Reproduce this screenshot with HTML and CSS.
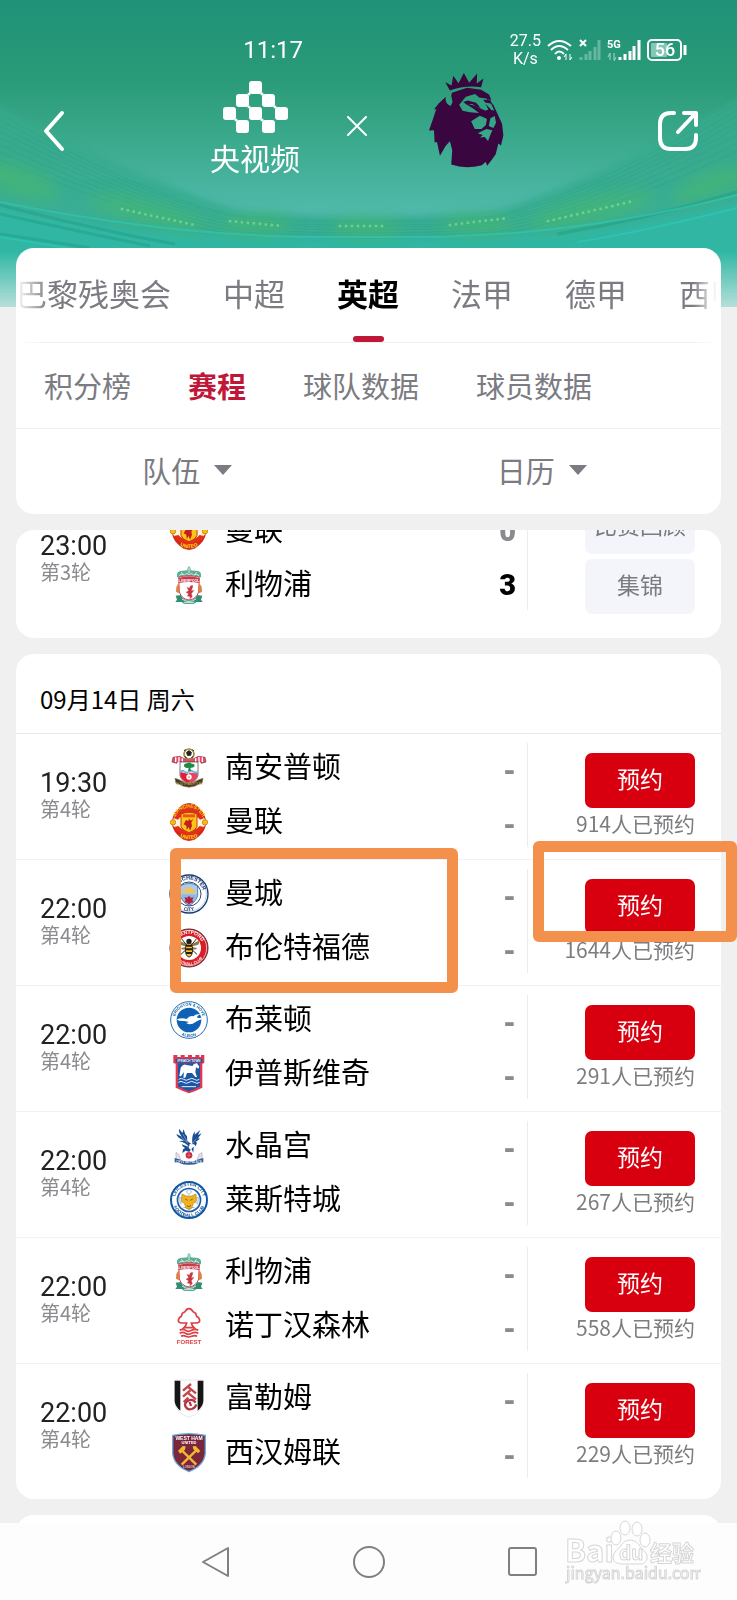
FILE: index.html
```html
<!DOCTYPE html>
<html lang="zh-CN">
<head>
    <meta charset="utf-8">
    <meta name="viewport" content="width=device-width, initial-scale=1">
    <title>英超赛程</title>
    <link rel="stylesheet" href="styles.css">
</head>
<body>
    <!-- 圆形队徽文字的弧线 -->
    <svg class="paths" aria-hidden="true">
        <defs>
            <path id="arc-top" d="M17 60a43 43 0 0 1 86 0"/>
            <path id="arc-bottom" d="M9 60a51 51 0 0 0 102 0"/>
        </defs>
    </svg>

    <header class="hero">
        <svg class="stadium" viewBox="0 0 737 307" preserveAspectRatio="none" aria-hidden="true">
            <defs>
                <linearGradient id="stands" x1="0" y1="0" x2="0" y2="1">
                    <stop offset="0" stop-color="#3aab8d"/>
                    <stop offset=".6" stop-color="#30aa8d"/>
                    <stop offset="1" stop-color="#33b9a8"/>
                </linearGradient>
                <filter id="soft"><feGaussianBlur stdDeviation="3"/></filter>
                <filter id="glow" x="-30%" y="-100%" width="160%" height="300%"><feGaussianBlur stdDeviation="8"/></filter>
            </defs>
            <path d="M-10 102q160 82 250 108 128 14 256 0Q600 180 747 94v223H-10z" fill="url(#stands)" opacity=".7" filter="url(#soft)"/>
            <g fill="none" stroke="#249b84" opacity=".3">
                <path d="M0 114q150 86 240 102 128 10 256 0 110-30 241-112"/>
                <path d="M0 120q150 82 240 98 128 10 256 0 110-28 241-108"/>
                <path d="M0 126q150 79 240 95 128 9 256 0 110-27 241-105"/>
                <path d="M0 132q150 76 240 91 128 9 256 0 110-26 241-101"/>
                <path d="M0 138q150 73 240 88 128 8 256 0 110-25 241-98"/>
                <path d="M0 145q150 70 240 84 128 8 256 0 110-23 241-94"/>
                <path d="M0 152q150 66 240 80 128 7 256 0 110-22 241-89"/>
                <path d="M0 160q150 62 240 75 128 7 256 0 110-20 241-84"/>
            </g>
            <path d="M-10 204q150 34 310 35h140q160-2 307-40v118H-10z" fill="#2fbaa9" opacity=".7" filter="url(#soft)"/>
            <g fill="#4bba68" opacity=".55" filter="url(#glow)">
                <ellipse cx="15" cy="180" rx="45" ry="14" transform="rotate(18 15 180)"/>
                <ellipse cx="150" cy="213" rx="62" ry="11" transform="rotate(13 150 213)"/>
                <ellipse cx="256" cy="225" rx="38" ry="10"/>
                <ellipse cx="366" cy="228" rx="36" ry="10"/>
                <ellipse cx="478" cy="225" rx="40" ry="10"/>
                <ellipse cx="590" cy="210" rx="65" ry="12" transform="rotate(-13 590 210)"/>
                <ellipse cx="710" cy="185" rx="40" ry="11" transform="rotate(-20 710 185)"/>
            </g>
            <g fill="none" stroke="#86dd93" stroke-width="3" stroke-linecap="round" stroke-dasharray="0 6" opacity=".65">
                <path d="M122 209l73 16M230 221l52 5M340 226h48M450 225l57-7M548 221l85-20"/>
            </g>
            <g fill="none" stroke="#1f9d86" stroke-width="3" opacity=".5">
                <path d="M0 205q100 26 175 39M0 214q90 20 150 32M737 192q-90 27-180 42M0 234l90 14"/>
            </g>
            <g fill="none" stroke="#2ec9b5" stroke-width="2" opacity=".6">
                <path d="M0 202q160 32 300 35h140q150-4 297-42M0 237l80 13M737 208q-100 25-160 34"/>
            </g>
        </svg>
        <div class="status">
            <time class="clock">11:17</time>
            <div class="status-icons">
                <span class="speed">27.5<br>K/s</span>
                <svg width="26" height="22" viewBox="0 0 26 22" fill="none" stroke="#fff" stroke-width="2">
                    <path d="M1 7q11-10 23 0M4 11q8-8 17 0M8 15q4-5 9 0"/>
                    <circle cx="12" cy="19" r="2" fill="#fff" stroke="none"/>
                    <path d="M19 15v6M23 15v6M17 18l2-3M25 18l-2 3" stroke-width="1"/>
                </svg>
                <svg width="22" height="22" viewBox="0 0 22 22" stroke="#fff">
                    <path d="M1 1l6 6M7 1L1 7" stroke-width="2"/>
                    <path d="M2 21v-3M7 21v-6M11 21v-9M16 21V8M20 21V1" stroke-width="3" opacity=".3"/>
                </svg>
                <svg width="34" height="22" viewBox="0 0 34 22" stroke="#fff">
                    <text class="net-type" x="0" y="9">5G</text>
                    <path d="M3 14v7M7 14v7M1 18l2-4M9 18l-2 4" stroke-width="1" opacity=".6"/>
                    <path d="M13 21v-3M18 21v-6M23 21v-9M27 21V7M32 21V1" stroke-width="3"/>
                </svg>
                <svg width="40" height="22" viewBox="0 0 40 22">
                    <rect x="1" y="1" width="33" height="20" rx="4" fill="none" stroke="#fff" stroke-width="2"/>
                    <rect x="4" y="4" width="16" height="14" rx="1" fill="#fff" opacity=".45"/>
                    <path d="M38 6v10" stroke="#fff" stroke-width="3"/>
                    <text class="battery-level" x="18" y="17">56</text>
                </svg>
            </div>
        </div>
        <div class="topbar">
            <button class="icon-button" aria-label="返回">
                <svg width="22" height="42" viewBox="0 0 22 42" fill="none" stroke="#fff" stroke-width="4" stroke-linecap="round" stroke-linejoin="round"><path d="M19 3L3 21l16 18"/></svg>
            </button>
            <div class="partners">
                <div class="brand">
                    <svg width="65" height="52" viewBox="99 66 195 156" fill="#fff">
                        <rect x="177" y="66" width="39" height="39" rx="9"/>
                        <rect x="138" y="105" width="39" height="39" rx="9"/>
                        <rect x="216" y="105" width="39" height="39" rx="9"/>
                        <rect x="99" y="144" width="39" height="39" rx="9"/>
                        <rect x="177" y="144" width="39" height="39" rx="9"/>
                        <rect x="255" y="144" width="39" height="39" rx="9"/>
                        <rect x="138" y="183" width="39" height="39" rx="9"/>
                        <rect x="216" y="183" width="39" height="39" rx="9"/>
                        <path d="M173 101h8v8h-8zM212 101h8v8h-8zM173 140h8v8h-8zM251 140h8v8h-8zM134 179h8v8h-8zM212 179h8v8h-8z"/>
                    </svg>
                    <span class="brand-name">央视频</span>
                </div>
                <svg class="cross" width="20" height="20" viewBox="0 0 20 20" stroke="#fff" stroke-width="2" stroke-linecap="round"><path d="M1 1l18 18M19 1L1 19"/></svg>
                <svg class="lion" width="75" height="96" viewBox="715 35 226 288" fill="#39063f">
                    <path d="M778 90l-14-25 19 10 5-29 16 22 16-31 16 30 24-28-1 30 20-15-7 26q-49-7-94 10z"/>
                    <path fill-rule="evenodd" d="M784 97l46-15 42 6 24 14 7 17-10-3 16 18 11 23 15 33 4 35-7 31-8-6-8 32-14 20-12 15-4-12-12 10q-49 13-92-2l3-43-7-27-13 14-17 30-9-42-7 2-2-37-15 1 12-35 10-30-7 1 14-18 22-20q-5 18 14 28l6-12-4-19zM806 133l20-24 28-8 12 10 22 3 14 15 10 22-14 6-25-12-21-9-30-8 26 16 18 14-28-2-22-5zM842 183l26-17 22 9-4 20-13 11-20 0zM900 174l13-7 4 20-8 16-14-6zM862 219l26-13 18 4-7 16-6 16-10-12-14 2 8-8z"/>
                    <path d="M818 125l14-5 25 7 13 15-12-3-13-8-16 1zM867 99l11 18 21 1 6 12-21-4zM885 130l18 19 12 2-2 14-14 2-10 10-9-13-17-9 20-3 11-5z"/>
                </svg>
            </div>
            <button class="icon-button" aria-label="分享">
                <svg width="42" height="42" viewBox="0 0 42 42" fill="none" stroke="#fff" stroke-width="4" stroke-linecap="round" stroke-linejoin="round"><path d="M17 3h-3Q3 3 3 14v14q0 11 11 11h14q11 0 11-11v-3M27 3h12v12M38 4L21 22"/></svg>
            </button>
        </div>
    </header>

    <main class="content">
        <section class="card filters">
            <nav class="leagues">
                <a href="#">巴黎残奥会</a>
                <a href="#">中超</a>
                <a href="#" class="active">英超</a>
                <a href="#">法甲</a>
                <a href="#">德甲</a>
                <a href="#">西甲</a>
            </nav>
            <nav class="sections">
                <a href="#">积分榜</a>
                <a href="#" class="active">赛程</a>
                <a href="#">球队数据</a>
                <a href="#">球员数据</a>
            </nav>
            <div class="selects">
                <label class="picker">
                    <select aria-label="队伍"><option>队伍</option></select>
                    <span class="caret"></span>
                </label>
                <label class="picker">
                    <select aria-label="日历"><option>日历</option></select>
                    <span class="caret"></span>
                </label>
            </div>
        </section>

        <!-- 上一轮，已滚动到筛选栏下方 -->
        <section class="card scrolled">
            <article class="match">
                <div class="when"><time>23:00</time><span>第3轮</span></div>
                <div class="teams">
                    <div class="team">
                        <svg class="crest" viewBox="0 0 120 120">
                            <circle cx="60" cy="61" r="51" fill="#d5261c"/>
                            <ellipse cx="60" cy="61" rx="51" ry="28" fill="#fff4d8"/>
                            <path d="M29 101l14 11 17 4 17-4 14-11-6-8H35z" fill="#df3a16" stroke="#a92f16" stroke-width="2"/>
                            <path d="M15 49q13-27 45-27t45 27l-12 4Q83 39 60 39T27 53zM15 75q14 25 45 25t45-25l-13-3Q80 85 60 85T28 72z" fill="#e42f17"/>
                            <path d="M36 36q24-10 48 0v38q-5 12-24 18-19-6-24-18z" fill="#fdc514" stroke="#c3391c" stroke-width="3"/>
                            <path d="M51 54l7 3 2-7 6 6 7-6-6 12 2 9-6 15-4-11-6 9-1-13-8-4z" fill="#c51e1b"/>
                            <circle cx="12" cy="61" r="8" fill="#f5bd15" stroke="#c98b19" stroke-width="3"/>
                            <circle cx="108" cy="61" r="8" fill="#f5bd15" stroke="#c98b19" stroke-width="3"/>
                            <text font-size="15" font-weight="700" text-anchor="middle" fill="#ffd21c"><textPath href="#arc-bottom" startOffset="50%">UNITED</textPath></text>
                        </svg>
                        <span>曼联</span><b class="score lost">0</b>
                    </div>
                    <div class="team">
                        <svg class="crest" viewBox="0 0 120 120">
                            <path d="M24 28q1-12 18-11l13-1 1-8 4-5 4 5 1 8 13 1q17-1 18 11v9H24z" fill="#5caf96"/>
                            <path d="M31 31q8-8 16 0 6-11 13 0 8-10 13 0 10-7 17 1M60 7v18M37 22l6 7M83 22l-6 7" fill="none" stroke="#d9efe5" stroke-width="3"/>
                            <path d="M29 37q31-10 62 0l-2 44q-7 21-29 24-22-3-29-24z" fill="#fff" stroke="#c64a53" stroke-width="3"/>
                            <path d="M29 40q31-12 62 0v14q-31-6-62 0z" fill="#c83b4b"/>
                            <text x="60" y="51" font-size="11" font-weight="700" text-anchor="middle" fill="#fff">LIVERPOOL</text>
                            <path d="M72 62q-10-3-10 8l-8-3 5 10-8 5 8 4-4 7 9 2-2 7 8-7-3-9 8-10-8 2z" fill="#c73645" stroke="#c73645"/>
                            <path d="M22 66q4-7 7-11 0 8 4 13l-4 17-8-5zM98 66q-4-7-7-11 0 8-4 13l4 17 8-5z" fill="#df804b"/>
                            <path d="M20 92l15-2q7 16 25 16t25-16l15 2-4 12 5 7H82l-7 5H45l-7-5H19l5-7z" fill="#318d75"/>
                            <path d="M39 102q21 15 42 0M44 112h32" stroke="#d2ede2" stroke-width="3" fill="none"/>
                        </svg>
                        <span>利物浦</span><b class="score">3</b>
                    </div>
                </div>
                <div class="action replays">
                    <button class="replay">比赛回顾</button>
                    <button class="replay">集锦</button>
                </div>
            </article>
        </section>

        <section class="card day">
            <h2>09月14日 周六</h2>
            <article class="match">
                <div class="when"><time>19:30</time><span>第4轮</span></div>
                <div class="teams">
                    <div class="team">
                        <svg class="crest" viewBox="0 0 120 120">
                            <path d="M12 28l20-3 14 7h28l14-7 20 3 3 14-14 4-5-8-16 6H44l-16-6-5 8-14-4z" fill="#e9496a" stroke="#7d3142" stroke-width="2"/>
                            <path d="M20 28v14M30 27v12M40 31v10M80 31v10M90 27v12M100 28v14" stroke="#fff" stroke-width="4"/>
                            <circle cx="60" cy="18" r="15" fill="#fff" stroke="#a08a3c" stroke-width="5"/>
                            <path d="M53 13l7-5 7 5-2 9H55zM45 8l5-3M70 5l5 4M47 26l6 3M73 26l-6 3" fill="#222" stroke="#222" stroke-width="3"/>
                            <path d="M33 42h54v40q-5 20-27 26Q38 102 33 82z" fill="#fff" stroke="#333" stroke-width="2"/>
                            <path d="M34 72l26 6v28Q38 100 34 82z" fill="#e31b3c"/>
                            <path d="M60 74h26v8q-4 19-26 25z" fill="#ea4464"/>
                            <path d="M34 68q7-5 13 0t13 0 13 0 13 0v6q-7 5-13 0t-13 0-13 0-13 0z" fill="#69b5e0"/>
                            <path d="M45 55q-1-9 9-9 7-6 14 1 9-1 9 7-3 7-13 5l2 10h-9l2-10q-9 4-14-4z" fill="#1b8a45"/>
                            <circle cx="60" cy="87" r="8" fill="#fff"/><circle cx="60" cy="87" r="3" fill="#e4b02a"/>
                            <path d="M18 91l12 4q30 20 60 0l12-4-3 15-8 2q-31 19-62 0l-8-2z" fill="#463a22" stroke="#85713b" stroke-width="2"/>
                            <text x="60" y="112" font-size="10" text-anchor="middle" fill="#c7b36b">SOUTHAMPTON</text>
                        </svg>
                        <span>南安普顿</span><b class="score none">-</b>
                    </div>
                    <div class="team">
                        <svg class="crest" viewBox="0 0 120 120">
                            <circle cx="60" cy="61" r="51" fill="#d5261c"/>
                            <ellipse cx="60" cy="61" rx="51" ry="28" fill="#fff4d8"/>
                            <path d="M31 17l12-9 17-4 17 4 12 9-5 10H36zM29 101l14 11 17 4 17-4 14-11-6-8H35z" fill="#df3a16" stroke="#a92f16" stroke-width="2"/>
                            <path d="M15 49q13-27 45-27t45 27l-12 4Q83 39 60 39T27 53zM15 75q14 25 45 25t45-25l-13-3Q80 85 60 85T28 72z" fill="#e42f17"/>
                            <path d="M36 36q24-10 48 0v38q-5 12-24 18-19-6-24-18z" fill="#fdc514" stroke="#c3391c" stroke-width="3"/>
                            <path d="M42 37h36v9H42z" fill="#e65619"/>
                            <path d="M51 54l7 3 2-7 6 6 7-6-6 12 2 9-6 15-4-11-6 9-1-13-8-4z" fill="#c51e1b"/>
                            <circle cx="12" cy="61" r="8" fill="#f5bd15" stroke="#c98b19" stroke-width="3"/>
                            <circle cx="108" cy="61" r="8" fill="#f5bd15" stroke="#c98b19" stroke-width="3"/>
                            <text font-size="15" font-weight="700" text-anchor="middle" fill="#ffd21c"><textPath href="#arc-top" startOffset="50%">MANCHESTER</textPath></text>
                            <text font-size="15" font-weight="700" text-anchor="middle" fill="#ffd21c"><textPath href="#arc-bottom" startOffset="50%">UNITED</textPath></text>
                        </svg>
                        <span>曼联</span><b class="score none">-</b>
                    </div>
                </div>
                <div class="action"><button class="book">预约</button><span>914人已预约</span></div>
            </article>
            <article class="match">
                <div class="when"><time>22:00</time><span>第4轮</span></div>
                <div class="teams">
                    <div class="team">
                        <svg class="crest" viewBox="0 0 120 120">
                            <circle cx="60" cy="60" r="57" fill="#fff" stroke="#1a3b73" stroke-width="4"/>
                            <circle cx="60" cy="60" r="52" fill="none" stroke="#8cb8e6" stroke-width="2"/>
                            <circle cx="60" cy="60" r="36" fill="#fff" stroke="#294c86" stroke-width="3"/>
                            <path d="M34 36q26-16 52 0v29Q80 86 60 94 40 86 34 65z" fill="#a9cdee" stroke="#294c86" stroke-width="2"/>
                            <path d="M36 61h48q-3 22-24 31-21-9-24-31z" fill="#8abbe7"/>
                            <path d="M41 57V45l7 4 4-12 8 8 8-9 4 13 7-3-2 13z" fill="#f1c45a"/>
                            <path d="M60 65l5 6 9-1-4 8 4 7-9 1-5 6-5-6-9-1 4-7-4-8 9 1z" fill="#b71d3e"/>
                            <text font-size="16" font-weight="700" text-anchor="middle" fill="#1a3567"><textPath href="#arc-top" startOffset="50%">MANCHESTER</textPath></text>
                            <text font-size="15" font-weight="700" text-anchor="middle" fill="#1a3567"><textPath href="#arc-bottom" startOffset="50%">CITY</textPath></text>
                        </svg>
                        <span>曼城</span><b class="score none">-</b>
                    </div>
                    <div class="team">
                        <svg class="crest" viewBox="0 0 120 120">
                            <circle cx="60" cy="60" r="57" fill="#d91d29" stroke="#57252a" stroke-width="3"/>
                            <circle cx="60" cy="60" r="53" fill="none" stroke="#fff" stroke-width="2"/>
                            <circle cx="60" cy="60" r="36" fill="#fff"/>
                            <path d="M57 50L31 38q-4 10 4 13l20 5-19 4q2 9 20 1zM63 50l26-12q4 10-4 13l-20 5 19 4q-2 9-20 1z" fill="#927844"/>
                            <ellipse cx="60" cy="65" rx="11" ry="22" fill="#f4be36" stroke="#332b22" stroke-width="3"/>
                            <path d="M51 53h18M49 64h22M51 75h18" stroke="#231e19" stroke-width="6"/>
                            <circle cx="60" cy="40" r="8" fill="#231e19"/>
                            <path d="M50 66L36 79M70 66l14 13M52 50L38 33M68 50l14-17" stroke="#332b22" stroke-width="3"/>
                            <text font-size="15" font-weight="700" text-anchor="middle" fill="#fff"><textPath href="#arc-top" startOffset="50%">BRENTFORD</textPath></text>
                            <text font-size="11" font-weight="700" text-anchor="middle" fill="#fff"><textPath href="#arc-bottom" startOffset="50%">FOOTBALL CLUB</textPath></text>
                        </svg>
                        <span>布伦特福德</span><b class="score none">-</b>
                    </div>
                </div>
                <div class="action"><button class="book">预约</button><span>1644人已预约</span></div>
                <div class="mark mark-teams"></div>
                <div class="mark mark-book"></div>
            </article>
            <article class="match">
                <div class="when"><time>22:00</time><span>第4轮</span></div>
                <div class="teams">
                    <div class="team">
                        <svg class="crest" viewBox="0 0 120 120">
                            <circle cx="60" cy="60" r="55" fill="#fff" stroke="#1e70b2" stroke-width="3"/>
                            <circle cx="60" cy="60" r="37" fill="#0d62b5"/>
                            <path d="M22 59q15-7 31-2 8-11 21-8 4-7 21-7-8 4-12 10 6 3 11 1l7 4q-13 3-20 8-17 13-29 4l8-3-14-3q-13 1-24-4z" fill="#fff"/>
                            <text font-size="12" font-weight="700" text-anchor="middle" fill="#155c9f"><textPath href="#arc-top" startOffset="50%">BRIGHTON &amp; HOVE</textPath></text>
                            <text font-size="12" font-weight="700" text-anchor="middle" fill="#155c9f"><textPath href="#arc-bottom" startOffset="50%">ALBION</textPath></text>
                        </svg>
                        <span>布莱顿</span><b class="score none">-</b>
                    </div>
                    <div class="team">
                        <svg class="crest" viewBox="0 0 120 120">
                            <path d="M13 3h12v6h10V3h12v6h10V3h12v6h10V3h12v6h5V3h10v24l-6 2v72q-15 8-40 17-23-9-40-17V29l-7-2z" fill="#e03853"/>
                            <path d="M20 14h80v12H20z" fill="#29529b"/>
                            <path d="M27 28h66v69q-13 7-33 15-20-8-33-15z" fill="#1c56a5"/>
                            <path d="M35 41q9-14 17-8l19 3q2-8 13-8l7 10-3 6-7-4-2 15 5 14h-5l-10-12H54l-5 14h-6l2-17-9 13-5-1z" fill="#fff"/>
                            <path d="M29 76q8-6 15 0t16 0 16 0 15 0M28 85q8-6 16 0t16 0 16 0 16 0M38 98h43" fill="none" stroke="#e8f2ff" stroke-width="3"/>
                            <text x="60" y="24" font-size="9" font-weight="700" text-anchor="middle" fill="#fff">IPSWICH TOWN</text>
                        </svg>
                        <span>伊普斯维奇</span><b class="score none">-</b>
                    </div>
                </div>
                <div class="action"><button class="book">预约</button><span>291人已预约</span></div>
            </article>
            <article class="match">
                <div class="when"><time>22:00</time><span>第4轮</span></div>
                <div class="teams">
                    <div class="team">
                        <svg class="crest" viewBox="0 0 120 120">
                            <path d="M60 63Q51 50 29 45l16-1Q24 35 22 24l17 8Q28 20 30 8l10 13 4-11q3 15 10 21l1 14 15 11q-3-28 8-40l-1 10 17-14-7 15 11-5-11 15 6 1-13 10 4 2q-1 10-10 14l-1 16-6-12-6 10-11-4-10 7 2-11 6-4q-9-4-10-11z" fill="#1b4e91"/>
                            <path d="M37 34l19 17M42 25l13 22M82 38L70 53" stroke="#9eb9da" stroke-width="2"/>
                            <path d="M62 54l13 1 6 6-9 3-7 7-6-5z" fill="#fff"/>
                            <path d="M21 101V79l8 6 6 16zM84 101l7-17 8-4v20z" fill="#e9e1e4" stroke="#a6abbc" stroke-width="2"/>
                            <circle cx="60" cy="88" r="10" fill="#c52a41"/><path d="M53 88h14M60 80v15" stroke="#ef7781" stroke-width="2"/>
                            <path d="M17 96l13 4q30 13 60 0l13-4v13l-12 1q-31 13-62 0l-12-1z" fill="#345d9c"/>
                            <text x="60" y="110" font-size="9" text-anchor="middle" fill="#fff">CRYSTAL PALACE</text>
                        </svg>
                        <span>水晶宫</span><b class="score none">-</b>
                    </div>
                    <div class="team">
                        <svg class="crest" viewBox="0 0 120 120">
                            <circle cx="60" cy="60" r="54" fill="#fff" stroke="#0d59a8" stroke-width="6"/>
                            <circle cx="60" cy="60" r="37" fill="#145dac"/><circle cx="60" cy="60" r="32" fill="#fff"/>
                            <path d="M60 28l8 8-8 7-8-7zM32 52l9 4v10l-7 6zM88 52l-9 4v10l7 6zM43 83l11-1 6 9 6-9 11 1" fill="none" stroke="#9db8d5" stroke-width="3"/>
                            <path d="M39 42l13 6h16l13-6 1 22-9 6-5 15-8 3-9-3-5-15-9-6z" fill="#edb422" stroke="#be7f16" stroke-width="2"/>
                            <path d="M49 57l7 4M71 57l-7 4M54 77l6 3 6-3" stroke="#8d5b1c" stroke-width="3" fill="none"/>
                            <text font-size="14" font-weight="700" text-anchor="middle" fill="#16498e"><textPath href="#arc-top" startOffset="50%">LEICESTER CITY</textPath></text>
                            <text font-size="14" font-weight="700" text-anchor="middle" fill="#16498e"><textPath href="#arc-bottom" startOffset="50%">FOOTBALL CLUB</textPath></text>
                        </svg>
                        <span>莱斯特城</span><b class="score none">-</b>
                    </div>
                </div>
                <div class="action"><button class="book">预约</button><span>267人已预约</span></div>
            </article>
            <article class="match">
                <div class="when"><time>22:00</time><span>第4轮</span></div>
                <div class="teams">
                    <div class="team">
                        <svg class="crest" viewBox="0 0 120 120">
                            <path d="M24 28q1-12 18-11l13-1 1-8 4-5 4 5 1 8 13 1q17-1 18 11v9H24z" fill="#5caf96"/>
                            <path d="M31 31q8-8 16 0 6-11 13 0 8-10 13 0 10-7 17 1M60 7v18M37 22l6 7M83 22l-6 7" fill="none" stroke="#d9efe5" stroke-width="3"/>
                            <path d="M29 37q31-10 62 0l-2 44q-7 21-29 24-22-3-29-24z" fill="#fff" stroke="#c64a53" stroke-width="3"/>
                            <path d="M29 40q31-12 62 0v14q-31-6-62 0z" fill="#c83b4b"/>
                            <text x="60" y="51" font-size="11" font-weight="700" text-anchor="middle" fill="#fff">LIVERPOOL</text>
                            <path d="M72 62q-10-3-10 8l-8-3 5 10-8 5 8 4-4 7 9 2-2 7 8-7-3-9 8-10-8 2z" fill="#c73645" stroke="#c73645"/>
                            <path d="M22 66q4-7 7-11 0 8 4 13l-4 17-8-5zM98 66q-4-7-7-11 0 8-4 13l4 17 8-5z" fill="#df804b"/>
                            <path d="M20 92l15-2q7 16 25 16t25-16l15 2-4 12 5 7H82l-7 5H45l-7-5H19l5-7z" fill="#318d75"/>
                            <path d="M39 102q21 15 42 0M44 112h32" stroke="#d2ede2" stroke-width="3" fill="none"/>
                        </svg>
                        <span>利物浦</span><b class="score none">-</b>
                    </div>
                    <div class="team">
                        <svg class="crest" viewBox="0 0 120 120">
                            <path d="M53 51H38q-11-1-10-9 2-9 9-11l3-9 8-5q5-9 12-9t12 9l8 5 3 9q7 2 9 11 1 8-10 9H67q2 9 8 14H45q6-5 8-14zM32 73q10-6 18 0t18 0 20 0M32 82q10-6 18 0t18 0 20 0M36 91q7-4 14 0t18 0 16 0" fill="none" stroke="#dc3e43" stroke-width="5"/>
                            <text x="60" y="115" font-size="18" font-weight="700" text-anchor="middle" fill="#dc3e43">FOREST</text>
                        </svg>
                        <span>诺丁汉森林</span><b class="score none">-</b>
                    </div>
                </div>
                <div class="action"><button class="book">预约</button><span>558人已预约</span></div>
            </article>
            <article class="match">
                <div class="when"><time>22:00</time><span>第4轮</span></div>
                <div class="teams">
                    <div class="team">
                        <svg class="crest" viewBox="0 0 120 120">
                            <path d="M17 6h86v65q-4 35-43 47-39-12-43-47z" fill="#fff" stroke="#ddd" stroke-width="2"/>
                            <path d="M17 8h17v90Q19 87 17 70zM86 8h17v62q-2 17-17 28z" fill="#161616"/>
                            <path d="M42 38l24-20M56 26l25 20M42 56l22-19M56 44l25 20M44 72l14-13" fill="none" stroke="#c64249" stroke-width="7"/>
                            <path d="M80 74Q72 62 59 67q-14 6-10 18 6 12 19 8 12-4 13-14M62 72l4 12" fill="none" stroke="#b53542" stroke-width="7"/>
                        </svg>
                        <span>富勒姆</span><b class="score none">-</b>
                    </div>
                    <div class="team">
                        <svg class="crest" viewBox="0 0 120 120">
                            <path d="M11 7q49-10 98 0v53q-3 38-49 56-46-18-49-56z" fill="#7b263c" stroke="#64b1da" stroke-width="4"/>
                            <path d="M36 50l46 45M84 50L38 95" stroke="#efb931" stroke-width="7"/>
                            <path d="M27 54l14-15 9 1-2 10-14 12zM71 40l9-1 14 15-7 7-14-12z" fill="#efb931"/>
                            <text x="60" y="22" font-size="15" font-weight="700" text-anchor="middle" fill="#fff">WEST HAM</text>
                            <text x="60" y="34" font-size="12" font-weight="700" text-anchor="middle" fill="#fff">UNITED</text>
                            <text x="60" y="106" font-size="8" text-anchor="middle" fill="#fff">LONDON</text>
                        </svg>
                        <span>西汉姆联</span><b class="score none">-</b>
                    </div>
                </div>
                <div class="action"><button class="book">预约</button><span>229人已预约</span></div>
            </article>
        </section>

        <section class="card next-day"></section>
    </main>

    <footer class="system-nav">
        <button class="icon-button" aria-label="后退">
            <svg width="32" height="34" viewBox="0 0 32 34" fill="none" stroke="#808080" stroke-width="2" stroke-linejoin="round"><path d="M28 3v28L3 17z"/></svg>
        </button>
        <button class="icon-button" aria-label="主页">
            <svg width="32" height="34" viewBox="0 0 32 34" fill="none" stroke="#808080" stroke-width="2"><circle cx="16" cy="17" r="15"/></svg>
        </button>
        <button class="icon-button" aria-label="最近任务">
            <svg width="32" height="34" viewBox="0 0 32 34" fill="none" stroke="#808080" stroke-width="2"><rect x="3" y="3" width="27" height="27" rx="2"/></svg>
        </button>
        <svg class="watermark" width="136" height="66" viewBox="0 0 136 66">
            <g fill="#fff" stroke="#d6d6d6">
                <text x="0" y="43" font-size="31" font-weight="700">Bai</text>
                <ellipse cx="51" cy="19" rx="5" ry="7"/><ellipse cx="60" cy="9" rx="5" ry="7"/><ellipse cx="72" cy="10" rx="5" ry="7"/><ellipse cx="80" cy="21" rx="5" ry="7"/>
                <path d="M65 21q7 0 11 8 7 5 6 11-2 6-9 5H57q-8 0-9-6 0-6 7-11 4-7 10-7z"/>
                <text x="54" y="41" font-size="19" font-weight="700">du</text>
                <text x="85" y="42" font-size="22" font-weight="700">经验</text>
                <text x="1" y="60" font-size="16">jingyan.baidu.com</text>
            </g>
        </svg>
    </footer>
</body>
</html>
```
FILE: styles.css
```css
* {
    box-sizing: border-box;
}

body {
    margin: 0;
    height: 100vh;
    display: flex;
    flex-direction: column;
    overflow: hidden;
    background: #f0f0f0;
    color: #000;
    font-family: "Noto Sans CJK SC", "Noto Sans", sans-serif;
}

a {
    color: inherit;
    text-decoration: none;
}

button,
select {
    border: none;
    padding: 0;
    background: none;
    color: inherit;
    font: inherit;
}

.paths {
    position: absolute;
    width: 0;
    height: 0;
}

/* 顶部 */
.hero {
    position: relative;
    flex: none;
    height: 248px;
    color: #fff;
}

.stadium {
    position: absolute;
    top: 0;
    left: 0;
    z-index: -1;
    width: 100%;
    height: 307px;
    background: linear-gradient(#1f9178, #2a9b78 26%, #3dab8f 48%, #50b9aa 68%, #35b5a0);
    mask-image: linear-gradient(#000 82%, rgba(0, 0, 0, 0.3));
}

.status {
    display: flex;
    justify-content: space-between;
    align-items: center;
    height: 66px;
    padding: 34px 50px 0 33%;
}

.clock {
    font-family: Roboto, sans-serif;
    font-size: 24px;
}

.status-icons {
    display: flex;
    align-items: center;
    gap: 6px;
}

.speed {
    font-family: Roboto, sans-serif;
    font-size: 16px;
    line-height: 18px;
    text-align: center;
}

.net-type {
    font: 700 11px Roboto, sans-serif;
    fill: #fff;
    stroke: none;
}

.battery-level {
    font: 500 18px Roboto, sans-serif;
    fill: #fff;
    text-anchor: middle;
}

.topbar {
    display: flex;
    justify-content: space-between;
    align-items: center;
    height: 130px;
    padding: 0 38px 0 43px;
}

.icon-button {
    display: flex;
    cursor: pointer;
}

.partners {
    display: flex;
    align-items: center;
    margin-right: 8px;
}

.brand {
    display: flex;
    flex-direction: column;
    align-items: center;
}

.brand-name {
    font-size: 30px;
    line-height: 48px;
}

.cross {
    margin: 0 62px 10px 47px;
}

.lion {
    margin-bottom: 22px;
}

/* 内容 */
.content {
    flex: 1;
    min-height: 0;
    display: flex;
    flex-direction: column;
    gap: 16px;
    padding: 0 16px;
    overflow: hidden;
}

.card {
    flex: none;
    border-radius: 18px;
    background: #fff;
}

.leagues {
    display: flex;
    gap: 52px;
    height: 95px;
    overflow: hidden;
    border-bottom: 1px solid #f0f0f0;
    color: #7b7b82;
    font-size: 31px;
    line-height: 90px;
    white-space: nowrap;
    mask-image: linear-gradient(90deg, transparent, #000 32px, #000 calc(100% - 28px), transparent calc(100% - 4px));
}

.leagues a {
    flex: none;
}

.leagues .active {
    display: flex;
    flex-direction: column;
    align-items: center;
    color: #000;
    font-weight: 700;
}

.leagues .active::after {
    content: "";
    width: 31px;
    height: 6px;
    margin-top: -2px;
    border-radius: 3px;
    background: #bf1737;
}

.sections {
    display: flex;
    gap: 57px;
    height: 86px;
    padding-left: 28px;
    border-bottom: 1px solid #f0f0f0;
    color: #7b7b82;
    font-size: 29px;
    line-height: 84px;
    white-space: nowrap;
}

.sections .active {
    color: #bf1737;
    font-weight: 700;
}

.selects {
    display: grid;
    grid-template-columns: 1fr 1fr;
    gap: 12px;
    height: 85px;
    padding: 0 8px 4px 0;
    color: #7b7b82;
    font-size: 29px;
}

.picker {
    display: flex;
    justify-content: center;
    align-items: center;
    gap: 13px;
}

.picker select {
    appearance: none;
}

.caret {
    border: 9px solid transparent;
    border-top: 10px solid #7b7b82;
    border-bottom: none;
}

/* 赛程 */
.scrolled {
    display: flex;
    flex-direction: column;
    justify-content: flex-end;
    height: 108px;
    padding-bottom: 16px;
    overflow: hidden;
}

.day {
    padding-bottom: 9px;
}

.day h2 {
    height: 80px;
    margin: 0;
    padding: 12px 24px 0;
    border-bottom: 1px solid #e8e8e8;
    font-size: 24px;
    font-weight: 400;
    line-height: 66px;
}

.match {
    position: relative;
    display: grid;
    grid-template-columns: 129px 1fr 167px;
    height: 126px;
    padding: 0 26px 0 24px;
    border-bottom: 1px solid #f2f2f2;
}

.match:last-child {
    border-bottom: none;
}

.when {
    display: flex;
    flex-direction: column;
    padding-top: 33px;
}

.when time {
    color: #222;
    font-family: Roboto, sans-serif;
    font-size: 27px;
    line-height: 32px;
}

.when span {
    color: #8a8a8f;
    font-size: 20px;
    line-height: 20px;
}

.teams {
    display: grid;
    gap: 4px;
    margin: 9px 0 12px;
    padding-right: 11px;
    border-right: 1px solid #ececec;
}

.team {
    display: flex;
    align-items: center;
    gap: 16px;
    height: 50px;
    font-size: 29px;
    line-height: 44px;
    white-space: nowrap;
}

.team span {
    padding-bottom: 6px;
}

.crest {
    flex: none;
    width: 40px;
    height: 40px;
    font-family: "Liberation Sans", sans-serif;
}

.score {
    margin-left: auto;
    font-family: Roboto, sans-serif;
    font-size: 29px;
    font-weight: 900;
}

.score.lost,
.score.none {
    color: #8a8a8f;
}

.score.none {
    padding-top: 6px;
}

.action {
    display: flex;
    flex-direction: column;
    align-items: flex-end;
    padding-top: 19px;
}

.action span {
    color: #7d7d80;
    font-size: 21px;
    line-height: 30px;
}

.book,
.replay {
    width: 110px;
    height: 55px;
    padding-bottom: 5px;
    border-radius: 7px;
    cursor: pointer;
}

.book {
    background: #d8000f;
    color: #fff;
    font-size: 23px;
}

.replays {
    gap: 5px;
    padding-top: 2px;
}

.replay {
    flex: none;
    background: #f4f5fa;
    color: #7b7b82;
    font-size: 23px;
}

/* 操作标注框 */
.mark {
    position: absolute;
    border: 11px solid #f3914c;
    border-radius: 6px;
}

.mark-teams {
    top: -12px;
    left: 154px;
    width: 288px;
    height: 145px;
}

.mark-book {
    top: -19px;
    right: -16px;
    width: 204px;
    height: 101px;
}

.next-day {
    height: 80px;
}

/* 系统导航栏 */
.system-nav {
    position: relative;
    flex: none;
    display: flex;
    justify-content: center;
    align-items: center;
    gap: 121px;
    height: 77px;
    background: #fdfdfd;
}

.watermark {
    position: absolute;
    right: 36px;
    top: -4px;
}
```
